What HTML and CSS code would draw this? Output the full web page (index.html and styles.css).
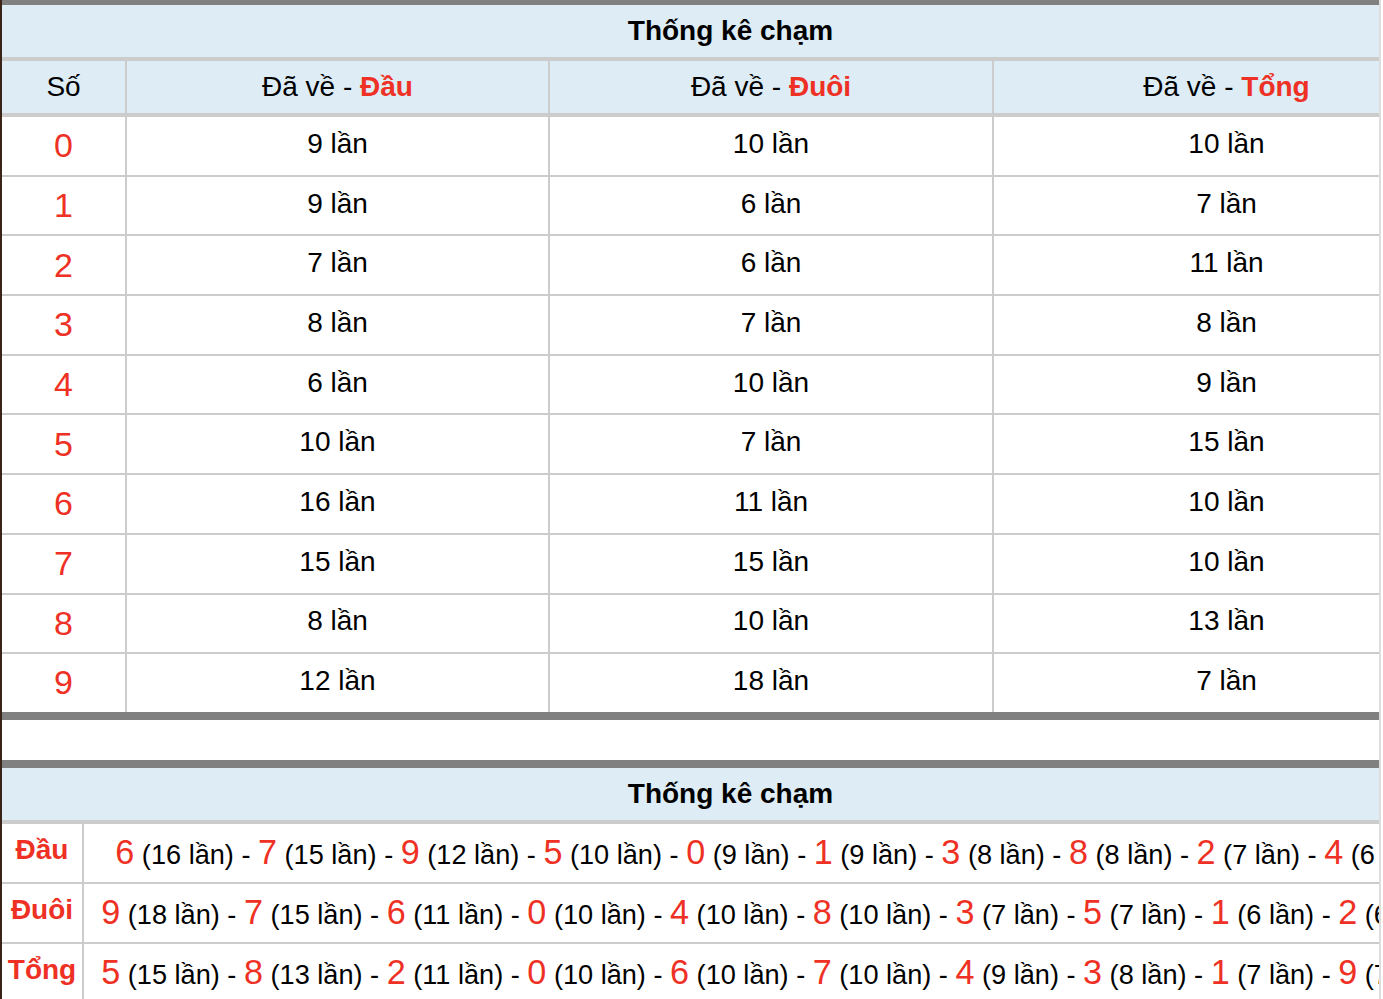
FILE: index.html
```html
<!DOCTYPE html>
<html lang="vi">
<head>
<meta charset="utf-8">
<title>Thống kê chạm</title>
<link rel="stylesheet" href="styles.css">
</head>
<body>
<div class="page">
  <div class="frame">
    <table class="tk tk-main">
      <colgroup>
        <col class="c-so"><col class="c-dau"><col class="c-duoi"><col class="c-tong">
      </colgroup>
      <thead>
        <tr class="row-title"><th colspan="4">Thống kê chạm</th></tr>
        <tr class="row-head">
          <th>Số</th>
          <th>Đã về - <b class="hl">Đầu</b></th>
          <th>Đã về - <b class="hl">Đuôi</b></th>
          <th class="last">Đã về - <b class="hl">Tổng</b></th>
        </tr>
      </thead>
      <tbody>
        <tr><td class="num">0</td><td>9 lần</td><td>10 lần</td><td class="last">10 lần</td></tr>
        <tr><td class="num">1</td><td>9 lần</td><td>6 lần</td><td class="last">7 lần</td></tr>
        <tr><td class="num">2</td><td>7 lần</td><td>6 lần</td><td class="last">11 lần</td></tr>
        <tr><td class="num">3</td><td>8 lần</td><td>7 lần</td><td class="last">8 lần</td></tr>
        <tr><td class="num">4</td><td>6 lần</td><td>10 lần</td><td class="last">9 lần</td></tr>
        <tr><td class="num">5</td><td>10 lần</td><td>7 lần</td><td class="last">15 lần</td></tr>
        <tr><td class="num">6</td><td>16 lần</td><td>11 lần</td><td class="last">10 lần</td></tr>
        <tr><td class="num">7</td><td>15 lần</td><td>15 lần</td><td class="last">10 lần</td></tr>
        <tr><td class="num">8</td><td>8 lần</td><td>10 lần</td><td class="last">13 lần</td></tr>
        <tr class="row-end"><td class="num">9</td><td>12 lần</td><td>18 lần</td><td class="last">7 lần</td></tr>
      </tbody>
    </table>

    <div class="spacer"></div>

    <table class="tk tk-sum">
      <colgroup>
        <col class="c-label"><col class="c-list">
      </colgroup>
      <thead>
        <tr class="row-title"><th colspan="2">Thống kê chạm</th></tr>
      </thead>
      <tbody>
        <tr>
          <td class="label">Đầu</td>
          <td class="list last"><span class="n">6</span> (16 lần) - <span class="n">7</span> (15 lần) - <span class="n">9</span> (12 lần) - <span class="n">5</span> (10 lần) - <span class="n">0</span> (9 lần) - <span class="n">1</span> (9 lần) - <span class="n">3</span> (8 lần) - <span class="n">8</span> (8 lần) - <span class="n">2</span> (7 lần) - <span class="n">4</span> (6 lần)</td>
        </tr>
        <tr>
          <td class="label">Đuôi</td>
          <td class="list last"><span class="n">9</span> (18 lần) - <span class="n">7</span> (15 lần) - <span class="n">6</span> (11 lần) - <span class="n">0</span> (10 lần) - <span class="n">4</span> (10 lần) - <span class="n">8</span> (10 lần) - <span class="n">3</span> (7 lần) - <span class="n">5</span> (7 lần) - <span class="n">1</span> (6 lần) - <span class="n">2</span> (6 lần)</td>
        </tr>
        <tr>
          <td class="label">Tổng</td>
          <td class="list last"><span class="n">5</span> (15 lần) - <span class="n">8</span> (13 lần) - <span class="n">2</span> (11 lần) - <span class="n">0</span> (10 lần) - <span class="n">6</span> (10 lần) - <span class="n">7</span> (10 lần) - <span class="n">4</span> (9 lần) - <span class="n">3</span> (8 lần) - <span class="n">1</span> (7 lần) - <span class="n">9</span> (7 lần)</td>
        </tr>
      </tbody>
    </table>
  </div>
</div>
</body>
</html>
```
FILE: styles.css
```css
html, body {
  margin: 0;
  padding: 0;
  background: #ffffff;
}

body {
  font-family: "Liberation Sans", Arial, Helvetica, sans-serif;
  color: #000000;
}

.page {
  display: flex;
  height: 999px;
  overflow: hidden;
}

.frame {
  width: 1377px;
  flex: none;
  overflow: hidden;
  border-left: 2px solid #3a2417;
  border-right: 2px solid #dddddd;
}

.tk {
  width: 1457px;
  table-layout: fixed;
  border-collapse: separate;
  border-spacing: 0;
}

.tk th,
.tk td {
  box-sizing: border-box;
  padding: 0;
  text-align: center;
  vertical-align: middle;
  border-right: 2px solid #cccccc;
  border-bottom: 2px solid #cccccc;
  white-space: nowrap;
}

.tk .last,
.tk .row-title th {
  border-right: none;
}

.tk-main {
  border-top: 5px solid #808080;
  border-bottom: 8px solid #808080;
}

.tk-sum {
  border-top: 8px solid #808080;
}

.c-so { width: 125px; }
.c-dau { width: 423px; }
.c-duoi { width: 444px; }
.c-tong { width: 465px; }

.c-label { width: 82px; }
.c-list { width: 1375px; }

.row-title th {
  height: 56px;
  background: #ddecf5;
  border-bottom: 4px solid #cccccc;
  font-size: 28px;
  font-weight: bold;
}

.row-head th {
  height: 56px;
  background: #ddecf5;
  border-bottom: 4px solid #cccccc;
  font-size: 28px;
  font-weight: normal;
}

.hl {
  color: #ee3124;
  font-weight: bold;
}

.tk-main td {
  height: 59.7px;
  font-size: 28px;
  padding-bottom: 4px;
}

.tk-main .row-end td {
  height: 57.6px;
  border-bottom: none;
}

.tk-main td.num {
  font-size: 34px;
  color: #ee3124;
  padding-bottom: 0;
}

.tk-sum td {
  height: 60px;
  font-size: 27.15px;
}

.tk-sum td.label {
  color: #ee3124;
  font-weight: bold;
  font-size: 28px;
  padding-bottom: 6px;
}

.tk-sum .n {
  font-size: 34.2px;
  color: #ee3124;
}

.spacer {
  height: 40px;
}
```
